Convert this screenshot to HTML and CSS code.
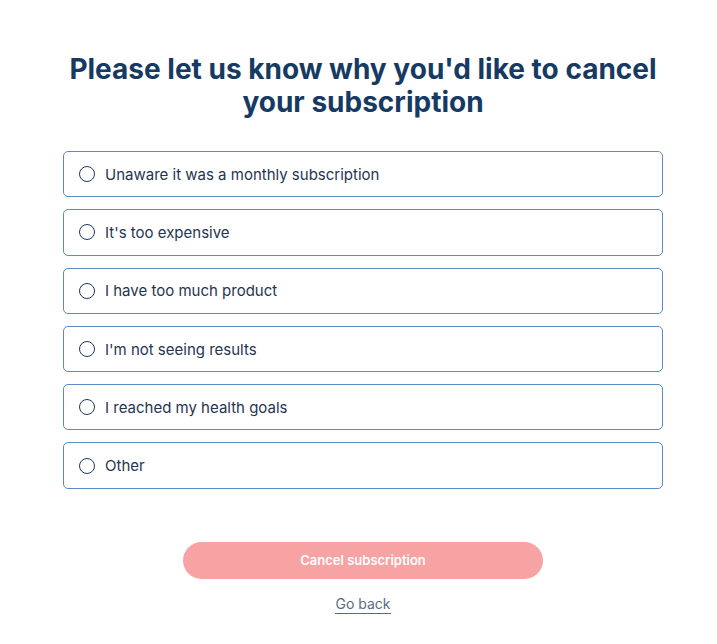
FILE: index.html
```html
<!DOCTYPE html>
<html lang="en">
<head>
<meta charset="utf-8">
<title>Cancel subscription</title>
<link rel="stylesheet" href="styles.css">
</head>
<body>
<main class="page">
  <h1 class="title">Please let us know why you'd like to cancel your subscription</h1>
  <div class="options">
    <label class="option"><span class="radio"></span><span class="label">Unaware it was a monthly subscription</span></label>
    <label class="option"><span class="radio"></span><span class="label">It's too expensive</span></label>
    <label class="option"><span class="radio"></span><span class="label">I have too much product</span></label>
    <label class="option"><span class="radio"></span><span class="label">I'm not seeing results</span></label>
    <label class="option"><span class="radio"></span><span class="label">I reached my health goals</span></label>
    <label class="option"><span class="radio"></span><span class="label">Other</span></label>
  </div>
  <div class="actions">
    <button class="cancel" type="button">Cancel subscription</button>
    <a class="back" href="#">Go back</a>
  </div>
</main>
</body>
</html>
```

FILE: styles.css
```css
* { box-sizing: border-box; }
body {
  margin: 0;
  background: #fff;
  font-family: Inter, "Noto Sans", sans-serif;
  color: #1c3553;
}
.page {
  width: 600px;
  margin-left: 63px;
  padding-top: 53px;
}
.title {
  margin: 0 0 32px;
  font-size: 28px;
  line-height: 33px;
  font-weight: 700;
  text-align: center;
  color: #163a62;
}
.options {
  display: flex;
  flex-direction: column;
  gap: 12px;
}
.option {
  display: flex;
  align-items: center;
  height: 46.3px;
  border: 1px solid #5b8ac4;
  border-radius: 5px;
  padding: 0 15px;
  gap: 10px;
  cursor: pointer;
}
.radio {
  width: 16px;
  height: 16px;
  border: 1.5px solid #1f3a5c;
  border-radius: 50%;
  flex: none;
}
.label {
  font-size: 15px;
  color: #1f3550;
}
.actions {
  display: flex;
  flex-direction: column;
  align-items: center;
  padding-top: 53px;
}
.cancel {
  width: 360px;
  height: 37px;
  border: none;
  border-radius: 19px;
  background: #f7a3a3;
  color: #fff;
  font-family: Inter, "Noto Sans", sans-serif;
  font-size: 13px;
  font-weight: 600;
}
.back {
  margin-top: 16px;
  font-size: 14px;
  line-height: 17px;
  color: #5a6b82;
  text-decoration: none;
  border-bottom: 1px solid #5a6b82;
  padding-bottom: 1px;
}
```
